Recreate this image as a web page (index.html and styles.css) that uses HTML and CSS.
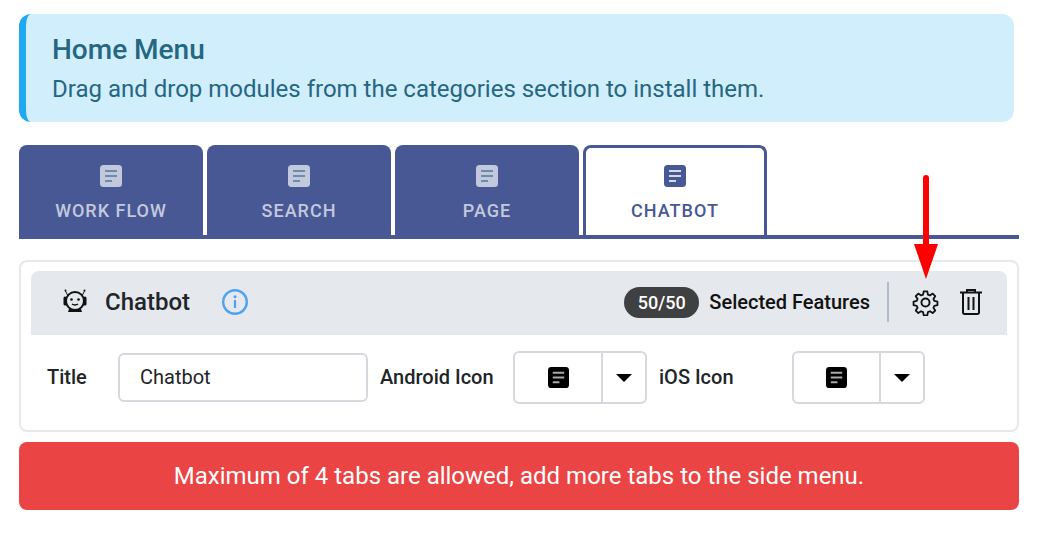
FILE: index.html
```html
<!DOCTYPE html>
<html lang="en">
<head>
    <meta charset="UTF-8">
    <meta name="viewport" content="width=device-width, initial-scale=1.0">
    <title>Home Menu</title>
    <link rel="stylesheet" href="styles.css">
</head>
<body>
    <svg width="0" height="0" class="defs">
        <symbol id="note" viewBox="0 0 22 22">
            <rect width="22" height="22" rx="3.500" fill="currentColor"/>
            <path d="M5 5h12v2H5zM5 10h12v2H5zM5 15h7v2H5z" fill="var(--note-line)"/>
        </symbol>
    </svg>

    <div class="page">
        <div class="alert">
            <h1>Home Menu</h1>
            <p>Drag and drop modules from the categories section to install them.</p>
        </div>

        <div class="tabs">
            <div class="tab">
                <svg class="tab-icon"><use href="#note"/></svg>
                <span>WORK FLOW</span>
            </div>
            <div class="tab">
                <svg class="tab-icon"><use href="#note"/></svg>
                <span>SEARCH</span>
            </div>
            <div class="tab">
                <svg class="tab-icon"><use href="#note"/></svg>
                <span>PAGE</span>
            </div>
            <div class="tab active">
                <svg class="tab-icon"><use href="#note"/></svg>
                <span>CHATBOT</span>
            </div>
        </div>

        <div class="panel">
            <div class="panel-head">
                <svg class="bot-icon" viewBox="0 0 28 24" fill="none" stroke="#111" stroke-width="2">
                    <circle cx="14" cy="12" r="9"/>
                    <path d="M4 9v6M24 9v6" stroke-width="3" stroke-linecap="round"/>
                    <path d="M7 7L4.500 2M21 7l2.500-5" stroke-width="1"/>
                    <circle cx="4.500" cy="1.500" r="1" fill="#111" stroke="none"/>
                    <circle cx="23.500" cy="1.500" r="1" fill="#111" stroke="none"/>
                    <circle cx="10.500" cy="10.500" r="1.300" fill="#111" stroke="none"/>
                    <circle cx="17.500" cy="10.500" r="1.300" fill="#111" stroke="none"/>
                    <path d="M11 15c1.500 1.300 4.500 1.300 6 0" stroke-width="1.300"/>
                    <path d="M8 20h12l1 3H7z" fill="#111" stroke="none"/>
                </svg>
                <span class="panel-title">Chatbot</span>
                <svg class="info-icon" viewBox="0 0 26 26" fill="none">
                    <circle cx="13" cy="13" r="11.800" stroke="#4da3ee" stroke-width="2.400"/>
                    <rect x="11.900" y="11" width="2.200" height="8" fill="#4da3ee"/>
                    <circle cx="13" cy="7.800" r="1.500" fill="#4da3ee"/>
                </svg>
                <span class="count">50/50</span>
                <span class="selected">Selected Features</span>
                <span class="sep"></span>
                <svg class="gear-icon" viewBox="0 0 24 24" fill="none" stroke="#111" stroke-width="1.700" stroke-linejoin="round">
                    <path d="M10.300 1.500h3.400l.6 3 1.900.8 2.600-1.700 2.400 2.400-1.700 2.600.8 1.900 3 .6v3.400l-3 .6-.8 1.900 1.700 2.600-2.400 2.400-2.600-1.700-1.900.8-.6 3h-3.400l-.6-3-1.900-.8-2.600 1.700-2.400-2.400 1.700-2.600-.8-1.900-3-.6v-3.400l3-.6.8-1.900-1.700-2.600 2.400-2.400 2.600 1.700 1.900-.8z" transform="translate(12 12) scale(.94) translate(-12 -12)"/>
                    <circle cx="12" cy="12" r="3.600"/>
                </svg>
                <svg class="trash-icon" viewBox="0 0 22 26" fill="none" stroke="#111" stroke-width="2">
                    <path d="M0 3.500h22M7 3V1h8v2"/>
                    <path d="M3 4v19.500a1.500 1.500 0 0 0 1.500 1.500h13a1.500 1.500 0 0 0 1.500-1.500V4"/>
                    <path d="M8.500 8v13M13.500 8v13"/>
                </svg>
            </div>
            <div class="panel-body">
                <label class="title-label">Title</label>
                <input class="title-input" type="text" value="Chatbot">
                <label class="android-label">Android Icon</label>
                <div class="picker">
                    <div class="picker-value"><svg class="picker-icon"><use href="#note"/></svg></div>
                    <div class="picker-arrow"><i></i></div>
                </div>
                <label class="ios-label">iOS Icon</label>
                <div class="picker ios-picker">
                    <div class="picker-value"><svg class="picker-icon"><use href="#note"/></svg></div>
                    <div class="picker-arrow"><i></i></div>
                </div>
            </div>
        </div>

        <div class="error">Maximum of 4 tabs are allowed, add more tabs to the side menu.</div>

        <!-- red annotation over the settings icon -->
        <svg class="callout" width="30" height="106" viewBox="0 0 30 106">
            <path d="M15 4v68" stroke="#fe0000" stroke-width="6" stroke-linecap="round"/>
            <path d="M3 70h24L15 105z" fill="#fe0000"/>
        </svg>
    </div>
</body>
</html>
```

FILE: styles.css
```css
* {
    margin: 0;
    padding: 0;
    box-sizing: border-box;
    font-family: 'Roboto', Arial, sans-serif;
}

body {
    background: white;
}

.defs {
    position: absolute;
}

.page {
    position: relative;
    width: 1019px;
    margin-left: 19px;
    padding-top: 14px;
}

.alert {
    width: 995px;
    height: 108px;
    padding: 20px 0 0 26px;
    background: #d1eefd;
    border-left: 7px solid #1eaaf0;
    border-radius: 12px;
    color: #256680;
}

.alert h1 {
    font-size: 28px;
    font-weight: 500;
    line-height: 32px;
}

.alert p {
    margin-top: 7px;
    font-size: 24px;
    line-height: 32px;
}

.tabs {
    display: flex;
    gap: 4px;
    width: 1000px;
    height: 94px;
    margin-top: 23px;
    border-bottom: 4px solid #485894;
}

.tab {
    display: flex;
    flex-direction: column;
    align-items: center;
    width: 184px;
    height: 90px;
    padding-top: 20px;
    background: #485894;
    border-radius: 8px 8px 0 0;
    color: #c3c9dd;
    --note-line: #6b8cab;
    font-size: 18px;
    font-weight: 500;
    letter-spacing: 1px;
}

.tab span {
    margin-top: 13px;
    line-height: 22px;
}

.tab-icon {
    width: 22px;
    height: 22px;
}

.tab.active {
    padding-top: 17px;
    background: white;
    border: 3px solid #485894;
    border-bottom: none;
    color: #485894;
    --note-line: #d5d9e8;
}

.panel {
    width: 1000px;
    height: 172px;
    margin-top: 21px;
    padding: 9px 10px 0;
    border: 2px solid #e6e8ec;
    border-radius: 8px;
}

.panel-head {
    display: flex;
    align-items: center;
    height: 64px;
    padding: 0 25px 2px 30px;
    background: #e5e8ec;
    border-radius: 8px 8px 0 0;
}

.bot-icon {
    width: 28px;
    height: 26px;
    margin-bottom: 3px;
}

.panel-title {
    margin-left: 16px;
    font-size: 24px;
    font-weight: 500;
    color: #212529;
}

.info-icon {
    width: 26px;
    height: 26px;
    margin-left: 32px;
}

.count {
    margin-left: auto;
    width: 75px;
    height: 31px;
    background: #3f4042;
    border-radius: 16px;
    color: white;
    font-size: 18px;
    font-weight: 500;
    line-height: 31px;
    text-align: center;
}

.selected {
    margin-left: 10px;
    font-size: 20px;
    font-weight: 500;
    color: #111;
}

.sep {
    width: 2px;
    height: 40px;
    margin-left: 17px;
    background: #b4bac9;
}

.gear-icon {
    width: 27px;
    height: 27px;
    margin-left: 23px;
}

.trash-icon {
    width: 22px;
    height: 26px;
    margin-left: 21px;
}

.panel-body {
    display: flex;
    align-items: center;
    height: 85px;
    padding-left: 16px;
    font-size: 20px;
    font-weight: 500;
    color: #212529;
}

.panel-body label {
    padding-bottom: 2px;
}

.title-label {
    width: 71px;
}

.title-input {
    width: 250px;
    height: 49px;
    padding: 0 0 2px 20px;
    border: 2px solid #d6d8de;
    border-radius: 6px;
    font-size: 20px;
    color: #212529;
    outline: none;
}

.android-label {
    width: 133px;
    margin-left: 12px;
}

.picker {
    display: flex;
    width: 134px;
    height: 53px;
    border: 2px solid #d6d8de;
    border-radius: 6px;
    color: black;
    --note-line: #aaa;
}

.ios-picker {
    width: 133px;
}

.picker-value {
    display: flex;
    flex: 1;
    align-items: center;
    justify-content: center;
    border-right: 2px solid #d6d8de;
}

.picker-icon {
    width: 21px;
    height: 21px;
}

.picker-arrow {
    display: flex;
    width: 42px;
    align-items: center;
    justify-content: center;
}

.picker-arrow i {
    border-top: 8px solid black;
    border-left: 8px solid transparent;
    border-right: 8px solid transparent;
}

.ios-label {
    width: 133px;
    margin-left: 12px;
}

.error {
    width: 1000px;
    height: 68px;
    margin-top: 10px;
    background: #ea4444;
    border-radius: 8px;
    color: white;
    font-size: 24px;
    line-height: 68px;
    text-align: center;
}

.callout {
    position: absolute;
    top: 174px;
    left: 892px;
}
```
